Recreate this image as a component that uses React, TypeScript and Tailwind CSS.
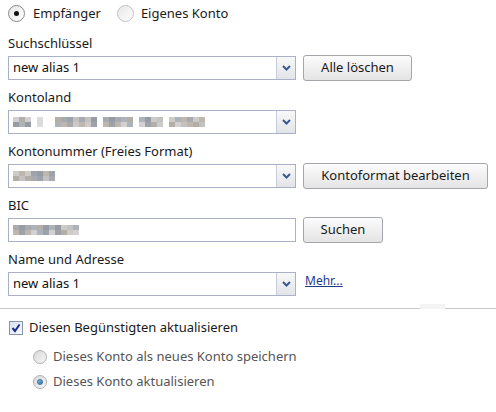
import React from "react";

const PALETTE = [
  "bg-[#a9aab0]",
  "bg-[#c4c2c0]",
  "bg-[#b3aea8]",
  "bg-[#d2d0d2]",
  "bg-[#9ea3ab]",
  "bg-[#bdb7b0]",
  "bg-[#cdcbc8]",
  "bg-[#aeb3ba]",
  "bg-[#979ba3]",
];

function Mosaic({ pattern, seed }: { pattern: string; seed: number }) {
  const rows = [0, 1];
  return (
    <div className="flex flex-col blur-[0.6px]">
      {rows.map((r) => (
        <div key={r} className="flex">
          {pattern.split("").map((ch, i) => {
            let cls = "bg-white";
            if (ch === "X") cls = PALETTE[(i * 7 + r * 5 + seed * 3 + ((i * i) % 5)) % PALETTE.length];
            if (ch === "d") cls = "bg-[#dcdcdc]";
            return <div key={i} className={`w-[6px] h-[5px] ${cls}`} />;
          })}
        </div>
      ))}
    </div>
  );
}

function Chevron() {
  return (
    <svg width="9" height="6" viewBox="0 0 9 6">
      <path d="M1 1 L4.5 4.5 L8 1" fill="none" stroke="#3a5a8e" strokeWidth="2" />
    </svg>
  );
}

function Select({ children }: { children?: React.ReactNode }) {
  return (
    <div className="flex h-[24px] w-[288px] border border-[#a9b0c7] bg-white">
      <div className="flex flex-1 items-center pl-[4px] text-[#111111] overflow-hidden">{children}</div>
      <div className="flex w-[19px] items-center justify-center border-l border-[#c8ccd8] bg-gradient-to-b from-[#f8f8f8] to-[#e2e4e9]">
        <Chevron />
      </div>
    </div>
  );
}

function Input({ children }: { children?: React.ReactNode }) {
  return (
    <div className="flex h-[24px] w-[288px] items-center border border-[#a9b0c7] bg-white pl-[4px]">
      {children}
    </div>
  );
}

function Button({ label, w }: { label: string; w: string }) {
  return (
    <button
      className={`ml-[7px] h-[26px] ${w} rounded-[3px] border border-[#a3a6ab] bg-gradient-to-b from-[#fcfcfc] to-[#e4e4e4] text-[13px] text-[#1a1a1a] flex items-center justify-center`}
    >
      {label}
    </button>
  );
}

function Label({ children }: { children: React.ReactNode }) {
  return <div className="h-[30px] pt-[8px] leading-[18px] pl-[8px] text-[#1a1a1a]">{children}</div>;
}

function BigRadio({ checked }: { checked?: boolean }) {
  return (
    <div
      className={`flex h-[17px] w-[17px] items-center justify-center rounded-full border ${
        checked ? "border-[#8a8a8a]" : "border-[#c2c2c2]"
      } bg-gradient-to-br from-[#e6e6e6] to-[#ffffff]`}
    >
      {checked && <div className="h-[5px] w-[5px] rounded-full bg-[#111111]" />}
    </div>
  );
}

function SmallRadio({ checked }: { checked?: boolean }) {
  return (
    <div className="flex h-[14px] w-[14px] items-center justify-center rounded-full border border-[#b0b0b0] bg-gradient-to-br from-[#d8d8d8] to-[#f6f6f6]">
      {checked && (
        <div className="h-[6px] w-[6px] rounded-full bg-gradient-to-br from-[#7fc0e6] to-[#2f77ad] border border-[#3f6f96]" />
      )}
    </div>
  );
}

export default function App() {
  return (
    <div
      className="relative w-[496px] h-[412px] bg-white text-[13px] text-[#1a1a1a]"
      style={{ fontFamily: '"Noto Sans", "Liberation Sans", sans-serif' }}
    >
      <div className="flex h-[26px] items-center pl-[8px] pt-[1px]">
        <BigRadio checked />
        <span className="ml-[8px]">Empfänger</span>
        <div className="ml-[16px]">
          <BigRadio />
        </div>
        <span className="ml-[7px]">Eigenes Konto</span>
      </div>

      <Label>Suchschlüssel</Label>
      <div className="flex h-[24px] items-center pl-[8px]">
        <Select>new alias 1</Select>
        <Button label="Alle löschen" w="w-[109px]" />
      </div>

      <Label>Kontoland</Label>
      <div className="flex h-[24px] items-center pl-[8px]">
        <Select>
          <Mosaic pattern="XXX.d..XXXXXXX.XXXXX.XXXX.XXXXXX" seed={1} />
        </Select>
      </div>

      <Label>Kontonummer (Freies Format)</Label>
      <div className="flex h-[24px] items-center pl-[8px]">
        <Select>
          <Mosaic pattern="XXXXXXX" seed={2} />
        </Select>
        <Button label="Kontoformat bearbeiten" w="w-[185px]" />
      </div>

      <Label>BIC</Label>
      <div className="flex h-[24px] items-center pl-[8px]">
        <Input>
          <Mosaic pattern="XXXXXXXXXXX" seed={3} />
        </Input>
        <Button label="Suchen" w="w-[80px]" />
      </div>

      <Label>Name und Adresse</Label>
      <div className="flex h-[24px] items-center pl-[8px]">
        <Select>new alias 1</Select>
        <a className="ml-[9px] -mt-[6px] text-[12px] text-[#1c3b8c] underline">Mehr...</a>
      </div>

      <div className="mt-[12px] h-[1px] bg-[#c8c8c8]" />
      <div className="absolute left-[420px] top-[304px] h-[5px] w-[25px] bg-[#f4f4f4]" />

      <div className="flex h-[34px] items-center pl-[9px] pt-[4px]">
        <div className="flex h-[14px] w-[14px] items-center justify-center border border-[#8593ad] bg-gradient-to-br from-[#d9e3f3] to-[#f7f9fd]">
          <svg width="10" height="10" viewBox="0 0 10 10">
            <path d="M1.5 5 L4 8 L8.5 1.5" fill="none" stroke="#1e2b88" strokeWidth="2" />
          </svg>
        </div>
        <span className="ml-[6px]">Diesen Begünstigten aktualisieren</span>
      </div>

      <div className="flex h-[26px] items-center pl-[33px] pt-[2px] text-[#555555]">
        <SmallRadio />
        <span className="ml-[6px]">Dieses Konto als neues Konto speichern</span>
      </div>
      <div className="flex h-[25px] items-center pl-[33px] text-[#555555]">
        <SmallRadio checked />
        <span className="ml-[6px]">Dieses Konto aktualisieren</span>
      </div>
    </div>
  );
}
